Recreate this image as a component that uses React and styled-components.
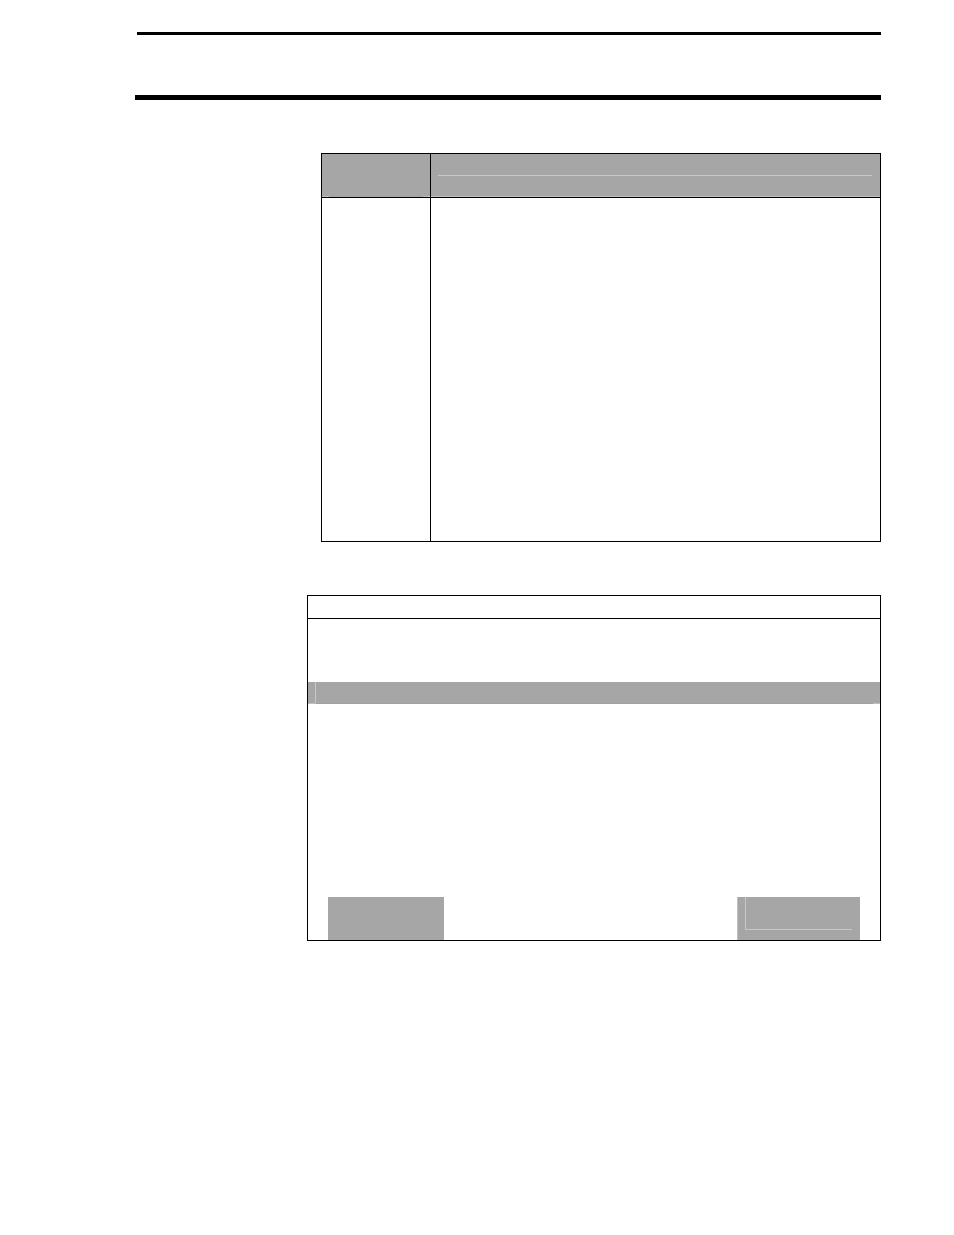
import React from "react";
import styled, { createGlobalStyle } from "styled-components";

const GlobalStyle = createGlobalStyle`
  body {
    margin: 0;
    background: #ffffff;
    font-family: "Liberation Sans", Arial, sans-serif;
  }
  *, *::before, *::after {
    box-sizing: border-box;
  }
`;

const Page = styled.main`
  display: flex;
  flex-direction: column;
  padding: 32px 73px 32px 135px;
`;

const PageHeader = styled.header`
  display: flex;
  flex-direction: column;
  gap: 60px;
  margin-bottom: 53px;
`;

const Rule = styled.hr`
  width: auto;
  height: ${({ $weight }) => $weight}px;
  margin: 0 0 0 ${({ $indent }) => $indent || 0}px;
  border: 0;
  background: #000000;
`;

const TableBlock = styled.div`
  margin: 0 0 53px 186px;
`;

const Table = styled.table`
  width: 100%;
  border: 1px solid #000000;
  border-spacing: 0;
  table-layout: fixed;

  th,
  td {
    padding: 0;
  }
  th {
    height: 44px;
    border-bottom: 1px solid #000000;
    background: #a6a6a6;
    vertical-align: top;
  }
  td {
    height: 343px;
  }
  th:first-child,
  td:first-child {
    width: 109px;
    border-right: 1px solid #000000;
  }
`;

const CornerMarks = styled.div`
  display: flex;
  align-items: flex-end;
  justify-content: space-between;
  height: 43px;

  &::before,
  &::after {
    content: "";
    width: 7px;
    height: 1px;
    background: #c0c0c0;
  }
`;

const HeadLine = styled.div`
  height: 43px;
  padding: 21px 8px 0 7px;
  border-bottom: 1px solid #c0c0c0;

  &::before {
    content: "";
    display: block;
    height: 1px;
    background: #c8c8c8;
  }
`;

const Panel = styled.section`
  display: flex;
  flex-direction: column;
  margin-left: 172px;
  border: 1px solid #000000;
`;

const TitleBar = styled.div`
  height: 23px;
  border-bottom: 1px solid #000000;
`;

const Band = styled.div`
  display: flex;
  height: 22px;
  margin: 63px 0 193px;
  background: #a6a6a6;
`;

const BandEdge = styled.div`
  width: 7px;
  border-bottom: 1px solid #c0c0c0;
`;

const BandBody = styled.div`
  flex: 1;
  border-left: 1px solid #c8c8c8;
  border-bottom: 1px solid #a0a0a0;
`;

const PanelFooter = styled.div`
  display: flex;
  justify-content: space-between;
  padding: 0 20px;
`;

const SoftKey = styled.div`
  width: ${({ $width }) => $width}px;
  height: 43px;
  background: #a6a6a6;
`;

const LinedKey = styled(SoftKey)`
  padding: 0 8px 10px 7px;
  border-left: 1px solid #c0c0c0;

  &::before {
    content: "";
    display: block;
    height: 33px;
    border-left: 1px solid #c8c8c8;
    border-bottom: 1px solid #c8c8c8;
  }
`;

const App = () => {
  return (
    <>
      <GlobalStyle />
      <Page>
        <PageHeader>
          <Rule $weight={3} $indent={2} />
          <Rule $weight={5} />
        </PageHeader>
        <TableBlock>
          <Table>
            <thead>
              <tr>
                <th>
                  <CornerMarks />
                </th>
                <th>
                  <HeadLine />
                </th>
              </tr>
            </thead>
            <tbody>
              <tr>
                <td />
                <td />
              </tr>
            </tbody>
          </Table>
        </TableBlock>
        <Panel>
          <TitleBar />
          <Band>
            <BandEdge />
            <BandBody />
            <BandEdge />
          </Band>
          <PanelFooter>
            <SoftKey $width={116} />
            <LinedKey $width={123} />
          </PanelFooter>
        </Panel>
      </Page>
    </>
  );
};

export default App;
